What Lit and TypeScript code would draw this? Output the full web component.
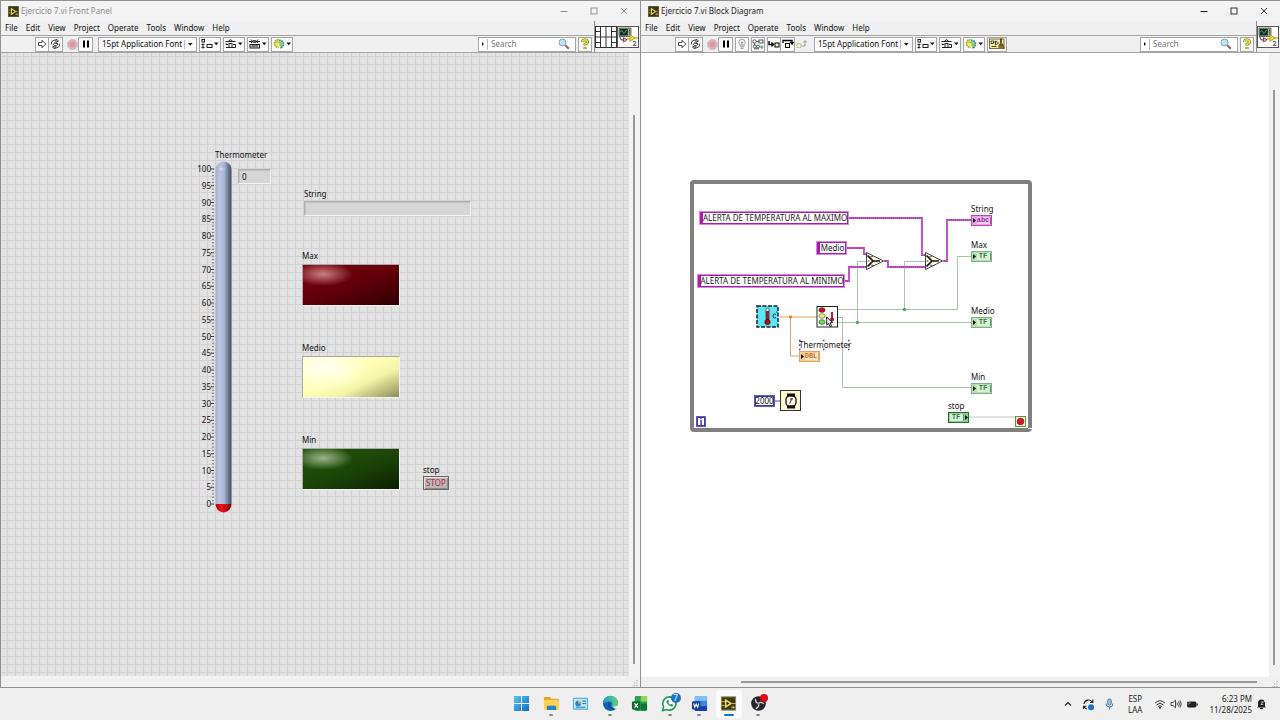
import { LitElement, html, css, svg, nothing } from "lit";
import { customElement, property } from "lit/decorators.js";
import { styleMap } from "lit/directives/style-map.js";
import { classMap } from "lit/directives/class-map.js";

const base = css`
  * { box-sizing: border-box; }
  button, input, select, output {
    font: inherit; color: inherit; margin: 0; padding: 0; border: 0;
    background: none; border-radius: 0; appearance: none; outline: none;
  }
  svg { display: block; flex: none; }
`;

/* ---------- toolbar glyphs ---------- */
const caret = svg`<path d="M0 0h4.500l-2.250 2.700z" fill="#111"/>`;
const glyphs: Record<string, unknown> = {
  run: html`<svg width="10" height="10" viewBox="0 0 10 10"><path d="M1.500 3.500h3.500V1.200L8.800 5 5 8.800V6.500H1.500z" fill="#fff" stroke="#333" stroke-width=".9"/></svg>`,
  cont: html`<svg width="11" height="10" viewBox="0 0 11 10"><g fill="none" stroke="#333" stroke-width=".9"><path d="M1.200 5.500Q1 1.500 4 1.200h3M9.800 4.500Q10 8.500 7 8.800H4"/><path d="M6 .300l2.500 1.500L6 3.500zM5 6.500L2.500 8.200 5 9.800z" fill="#fff"/><path d="M3 6l2-2.500 1 1.500 1-1 1 1-2 2.500-1-1.500"/></g></svg>`,
  abort: html`<svg width="11" height="11" viewBox="0 0 11 11"><path d="M3.500.8h4l2.700 2.700v4L7.500 10.200h-4L.8 7.500v-4z" fill="#e3b4bc" stroke="#bfaeb2" stroke-width=".8"/><circle cx="5.500" cy="5.500" r="2.900" fill="#d99aa6"/></svg>`,
  pause: html`<svg width="8" height="8" viewBox="0 0 8 8"><path d="M1 .5h2v7H1zM5 .5h2v7H5z" fill="#000"/></svg>`,
  bulb: html`<svg width="10" height="12" viewBox="0 0 10 12"><path d="M5 1a3.200 3.200 0 0 0-2 5.700V8h4V6.700a3.200 3.200 0 0 0-2-5.700z" fill="#f4f4f4" stroke="#999" stroke-width=".9"/><path d="M3.300 9h3.400M3.600 10.500h2.800M5 7.500V4M4 4l1 1 1-1" stroke="#888" stroke-width=".8" fill="none"/></svg>`,
  retain: html`<svg width="12" height="11" viewBox="0 0 12 11"><g fill="none" stroke="#444" stroke-width=".9"><circle cx="2.500" cy="2.500" r="1.700"/><rect x="7" y="1" width="4" height="3"/><path d="M4.200 2.500H7M2.500 4.200v2"/><circle cx="2.800" cy="7.500" r="1.500"/><circle cx="6" cy="7.500" r="1.500"/><path d="M2 9.800h5"/></g><path d="M8 8h3.500M9.800 6.300V10" stroke="#3a9d4c" stroke-width="1"/></svg>`,
  into: html`<svg width="12" height="9" viewBox="0 0 12 9"><path d="M1 1v3.500h4M3.500 2.500l2 2-2 2" fill="none" stroke="#000" stroke-width="1.400"/><rect x="7" y="3" width="4" height="4" fill="#f7f4c4" stroke="#000"/></svg>`,
  over: html`<svg width="12" height="10" viewBox="0 0 12 10"><path d="M1 4V1.500h9V4M8 3l2 2 1.500-2" fill="none" stroke="#000" stroke-width="1.300"/><rect x="3.500" y="4.500" width="4" height="4" fill="#f7f4c4" stroke="#000"/></svg>`,
  out: html`<svg width="12" height="10" viewBox="0 0 12 10"><rect x="1" y="5" width="4" height="3.500" fill="#f8f7d0" stroke="#b9b78f" stroke-width=".8"/><path d="M5.500 7H9V2M7.200 3.500L9 1.500l1.800 2" fill="none" stroke="#999" stroke-width="1"/></svg>`,
  align: html`<svg width="18" height="12" viewBox="0 0 18 12"><g fill="none" stroke="#222"><rect x="1" y="1.500" width="2.500" height="2.500"/><path d="M.5 6.500h3M2 5.500v5M.5 9.500h3"/><rect x="6" y="6.500" width="5" height="3"/></g><g transform="translate(13 4.500)">${caret}</g></svg>`,
  dist: html`<svg width="18" height="12" viewBox="0 0 18 12"><g fill="none" stroke="#222"><path d="M.5 3.500h10M3.500 3q2-2.500 4 0"/><path d="M1 5.500v1h2M1 9.500h3"/><rect x="4" y="5.500" width="3" height="4"/><path d="M7 9.500h3.500V6.500H8"/></g><g transform="translate(13 4.500)">${caret}</g></svg>`,
  size: html`<svg width="18" height="12" viewBox="0 0 18 12"><path d="M0 3.500h11M2 1.500L3.800 3.500 2 5M9 1.500L7.200 3.500 9 5" fill="none" stroke="#222"/><path d="M4 2h3v3H4z" fill="#555"/><rect x="1" y="6.500" width="9.500" height="3.500" fill="#ccc" stroke="#222"/><path d="M2.500 8h6.500" stroke="#222"/><g transform="translate(13 4.500)">${caret}</g></svg>`,
  order: html`<svg width="18" height="12" viewBox="0 0 18 12"><path d="M5.500 1.500a4 4 0 1 0 0 8" fill="#e8ec7a" stroke="#a8b020" stroke-width="1.700" stroke-dasharray="1.700 .6"/><path d="M6 2.500a3.700 3.700 0 1 1 1 7.300" fill="#8fd0dc" stroke="#2a8da6" stroke-width="1.700" stroke-dasharray="1.700 .6"/><path d="M3.500 4l3.500.500 1 3M6.500 6.500L8 8l1.500-1.700" fill="none" stroke="#b8c21c" stroke-width="1.300"/><g transform="translate(13.500 4.500)">${caret}</g></svg>`,
  clean: html`<svg width="16" height="12" viewBox="0 0 16 12"><rect x=".5" y="1" width="14.500" height="9.500" fill="#f5f1a0" stroke="#77703a"/><path d="M2 3h2.500v2.500H2zM6.500 3l3 2-3 2zM4.500 4h2M2.500 8.500h5" fill="#fff" stroke="#333" stroke-width=".9"/><path d="M12 .5v5" stroke="#3b2d10" stroke-width="1.600"/><path d="M9.500 11V7.500L10.800 5.500h2.700L15 7.500V11z" fill="#5c4718"/><path d="M11 7.500V11M13 7.500V11" stroke="#d6b050" stroke-width=".8"/></svg>`,
};

const viIcon = html`<svg width="22" height="22" viewBox="0 0 22 22"><rect x=".5" y=".5" width="21" height="21" fill="#fff" stroke="#555"/><rect x="2" y="2" width="12" height="8.500" fill="#a8a8a0" stroke="#444" stroke-width=".7"/><rect x="2.800" y="2.800" width="8" height="6.700" fill="#12301a"/><path d="M3.500 6q1.200-3 2.300 0t2.300 0 2-1" fill="none" stroke="#43c968" stroke-width=".8"/><path d="M12 4h1M12 6h1M12 8h1" stroke="#333"/><path d="M3 11q0 3.500 4.500 3" fill="none" stroke="#555a90" stroke-width="1.300"/><path d="M6.500 11.500l3.500 2.300-3.500 2.200z" fill="#f0a8b0" stroke="#a02a34" stroke-width=".9"/><path d="M13 8.500l4.500 3.500-4.500 3.500z" fill="#f2e23a" stroke="#8d8410" stroke-width=".7"/><path d="M10 13h3M17 12h4" stroke="#c8b420" stroke-width="1.300"/><text x="15.500" y="20" font-size="7" font-family="Noto Sans, sans-serif" fill="#111">2</text></svg>`;

const connector = html`<svg width="22" height="22" viewBox="0 0 22 22"><rect x=".5" y=".5" width="21" height="21" fill="#fff" stroke="#333"/><path d="M5.500 0v22M11 0v22M16.500 0v22M0 11h22M0 5.500h5.500M0 16.500h5.500M16.500 5.500H22M16.500 16.500H22" stroke="#333" stroke-width="1" fill="none"/></svg>`;

const lvLogo = (n: number) => html`<svg width=${n} height=${n} viewBox="0 0 16 16"><rect width="16" height="16" rx="1" fill="#3d3a1c"/><rect x=".8" y=".8" width="14.400" height="14.400" fill="none" stroke="#77703a" stroke-width=".8"/><path d="M5 4l6 4-6 4z" fill="#2a2814" stroke="#ead86b" stroke-width="1.500"/><path d="M1 6h3M1 10h3M11 8h3M11 12h4M13 10.500v3" stroke="#c9bb5a" stroke-width="1"/></svg>`;

@customElement("vi-window")
export class ViWindow extends LitElement {
  @property() heading = "";
  @property({ type: Boolean }) active = false;
  @property({ type: Boolean }) connector = false;
  @property({ attribute: false }) tools: string[][] = [];
  @property({ attribute: false }) toolsAfter: string[][] = [];

  static styles = [base, css`
    :host {
      display: grid; grid-template-rows: auto auto minmax(0, 1fr) auto;
      min-width: 0; min-height: 0; background: #f0f0f0;
      border: 1px solid #909090; border-width: 1px 0 1px 1px; color: #111;
    }
    .title { display: flex; align-items: center; height: 20px; padding: 0 1px 0 7px; gap: 2px; background: #f3f3f3; color: #8c8c8c; }
    .title h1 { flex: 1; margin: 0; font: inherit; }
    .title.on { color: #222; }
    .caps { display: flex; }
    .caps button { width: 30px; height: 20px; display: grid; place-items: center; }
    .head { display: flex; }
    .bars { flex: 1; min-width: 0; }
    .menu { display: flex; height: 14px; gap: 8px; padding-left: 4px; align-items: center; }
    .tools { display: flex; height: 18px; align-items: center; border: 1px solid #a4a4a4; border-width: 1px 0; padding: 0 2px 0 34px; gap: 2px; background: #f0f0f0; }
    .group { display: flex; }
    .group button { height: 15px; padding: 0; min-width: 14px; display: grid; place-items: center; border: 1px solid #a6a6a6; background: #fafafa; }
    .group button + button { border-left: 0; }
    .group .flat { border-color: transparent #a6a6a6 transparent transparent; background: none; }
    .group .bare { border-color: transparent; background: none; }
    .drop button { padding: 0 1px; }
    .font { display: flex; align-items: center; border: 1px solid #a6a6a6; background: #fafafa; width: 99px; height: 15px; margin-left: 3px; }
    .font select { flex: 1; min-width: 0; height: 13px; padding-left: 3px; }
    .font i { width: 12px; height: 9px; border-left: 1px solid #bbb; display: grid; place-items: center; pointer-events: none; }
    .spacer { flex: 1; }
    .search { display: flex; align-items: center; width: 98px; height: 15px; border: 1px solid #a6a6a6; background: #fff; padding: 0 5px 0 3px; gap: 3px; }
    .search input { flex: 1; min-width: 0; height: 11px; padding-left: 3px; border-left: 1px solid #bbb; }
    .search input::placeholder { color: #777; opacity: 1; }
    .help { width: 14px; height: 15px; border: 1px solid #a6a6a6; background: #fafafa; display: grid; place-items: center; }
    .pane { display: flex; padding-top: 5px; border-left: 1px solid #909090; border-bottom: 1px solid #a4a4a4; padding-right: 1px; }
    .body { display: grid; grid-template-columns: minmax(0, 1fr) 11px; min-height: 0; }
    .view { overflow: hidden; min-height: 0; display: grid; }
    .vscroll { padding: 62px 0 12px 4px; background: #f2f2f2; }
    .vscroll.up { padding-top: 37px; }
    .vscroll i, .foot i { display: block; background: #999; width: 2px; height: 100%; }
    .foot { height: 10px; display: flex; padding: 4px 2px 0 100px; }
    .foot.tall { height: 11px; }
    .foot i { flex: 1; height: 2px; margin-right: 15px; }
    .foot i.none { background: none; }
    .foot svg { margin-left: auto; }
  `];

  private group(names: string[], drop = false) {
    return html`<div class=${classMap({ group: true, drop })}>${names.map((n) => html`<button
      class=${classMap({ flat: n === "abort", bare: n === "out" })} aria-label=${n}>${glyphs[n]}</button>`)}</div>`;
  }

  render() {
    return html`
      <header class=${classMap({ title: true, on: this.active })}>
        ${lvLogo(11)}<h1>${this.heading}</h1>
        <div class="caps">
          <button aria-label="Minimize"><svg width="8" height="8" viewBox="0 0 8 8"><path d="M.5 4.500h7" stroke="currentColor"/></svg></button>
          <button aria-label="Maximize"><svg width="8" height="8" viewBox="0 0 8 8"><rect x="1" y="1" width="6" height="6" fill="none" stroke="currentColor" stroke-width=".9"/></svg></button>
          <button aria-label="Close"><svg width="8" height="8" viewBox="0 0 8 8"><path d="M1 1l6 6M7 1L1 7" stroke="currentColor" stroke-width=".9"/></svg></button>
        </div>
      </header>
      <div class="head">
        <div class="bars">
          <nav class="menu">${["File", "Edit", "View", "Project", "Operate", "Tools", "Window", "Help"].map((m) => html`<button>${m}</button>`)}</nav>
          <div class="tools">
            ${this.tools.map((g) => this.group(g))}
            <div class="font"><select aria-label="Font"><option>15pt Application Font</option></select><i><svg width="5" height="3" viewBox="0 0 5 3">${caret}</svg></i></div>
            ${this.toolsAfter.map((g) => this.group(g, true))}
            <span class="spacer"></span>
            <div class="search">
              <svg width="2" height="4" viewBox="0 0 2 4"><path d="M0 0l2 2-2 2z" fill="#111"/></svg>
              <input type="search" aria-label="Search" placeholder="Search">
              <svg width="12" height="12" viewBox="0 0 12 12"><path d="M7 7l3.800 3.800" stroke="#8b6a58" stroke-width="2"/><circle cx="4.500" cy="4.500" r="3.500" fill="#bfe3f2" stroke="#7fa6b8"/></svg>
            </div>
            <button class="help" aria-label="Help"><svg width="10" height="12" viewBox="0 0 10 12"><path d="M2.500 4Q2.500 1.800 5 1.800T7.500 4Q7.500 5.200 5 6.200V7.800M5 9v2" fill="none" stroke="#6a6a1a" stroke-width="2.800"/><path d="M2.500 4Q2.500 1.800 5 1.800T7.500 4Q7.500 5.200 5 6.200V7.800M5 9.200v1.500" fill="none" stroke="#e6ea3c" stroke-width="1.700"/></svg></button>
          </div>
        </div>
        <div class="pane">${this.connector ? connector : nothing}${viIcon}</div>
      </div>
      <div class="body"><div class="view"><slot></slot></div><div class=${classMap({ vscroll: true, up: this.active })}><i></i></div></div>
      <div class=${classMap({ foot: true, tall: !this.active })}>
        <i class=${this.active ? "" : "none"}></i>
        <svg width="6" height="6" viewBox="0 0 6 6"><path d="M5 0v1M5 2.500v1M5 5v1M2.500 2.500v1M2.500 5v1M0 5v1" stroke="#aaa" stroke-width="1.200"/></svg>
      </div>`;
  }
}

@customElement("front-panel")
export class FrontPanel extends LitElement {
  static styles = [base, css`
    :host {
      display: block; position: relative; background-color: #e2e2e2;
      background-image: linear-gradient(90deg, #d2d2d2 1px, transparent 1px), linear-gradient(#d2d2d2 1px, transparent 1px);
      background-size: 8px 8px; background-position: 6px 3px;
    }
    .item { position: absolute; display: flex; flex-direction: column; align-items: flex-start; line-height: 12px; }
    .thermo { left: 195px; top: 96px; }
    .thermo > label { padding-left: 19px; }
    .row { display: flex; align-items: flex-start; }
    .scale { display: flex; flex-direction: column; justify-content: space-between; width: 15px; height: 347px; margin-top: 2px; text-align: right; }
    .scale + svg { margin: 7px 1px 0 0; }
    .digital { width: 33px; height: 15px; margin: 8px 0 0 6px; padding-left: 3px; }
    .sunk { background: #d6d6d6; border: 1px solid; border-color: #b0b0b0 #f4f4f4 #f4f4f4 #b0b0b0; box-shadow: inset 1px 1px 1px #c2c2c2; }
    .string { left: 303px; top: 135px; gap: 1px; }
    .string input { width: 167px; height: 15px; }
    .led { left: 301px; gap: 2px; }
    .led.max { top: 197px; } .led.medio { top: 289px; } .led.min { top: 381px; }
    .led output { display: block; width: 98px; height: 42px; border: 1px solid; border-color: #a8a8a8 #f2f2f2 #f2f2f2 #a8a8a8; }
    .max output { background: radial-gradient(ellipse 30px 12px at 20px 9px, #c98080, #a0404000), linear-gradient(160deg, #740010 10%, #620008 50%, #2c0002 100%); }
    .medio output { background: radial-gradient(ellipse 46px 26px at 22px 10px, #fffff4, #ffffd000), linear-gradient(155deg, #ffffb4 45%, #f5f5a8 65%, #8c8c58 100%); }
    .min output { background: radial-gradient(ellipse 30px 12px at 20px 9px, #9bb58c, #5a8a4000), linear-gradient(160deg, #1f5208 10%, #1c4608 50%, #0a2000 100%); }
    .stop { left: 422px; top: 411px; }
    .stop button { width: 26px; height: 14px; line-height: 10px; background: #b8b8b8; border: 1px solid #666; box-shadow: inset 1px 1px #e2e2e2, inset -1px -1px #8a8a8a; color: #c8203c; }
  `];

  private led(name: string) {
    const id = name.toLowerCase();
    return html`<div class="item led ${id}"><label for=${id}>${name}</label><output id=${id}></output></div>`;
  }

  render() {
    const marks = Array.from({ length: 21 }, (_, i) => 100 - i * 5);
    const ticks = Array.from({ length: 101 }, (_, i) => i);
    return html`
      <div class="item thermo">
        <label for="temp">Thermometer</label>
        <div class="row">
          <div class="scale">${marks.map((m) => html`<span>${m}</span>`)}</div>
          <svg width="3" height="337" viewBox="0 0 3 337">${ticks.map((t) => svg`<path d=${`M${t % 5 ? 1 : 0} ${(t * 3.35 + 1).toFixed(2)}H3`} stroke=${t % 5 ? "#666" : "#222"} stroke-width=".9"/>`)}</svg>
          <svg width="17" height="353" viewBox="0 0 17 353">
            <defs>
              <linearGradient id="tube"><stop offset="0" stop-color="#a3aecc"/><stop offset=".25" stop-color="#bcc6e2"/><stop offset=".55" stop-color="#a8b4d0"/><stop offset=".85" stop-color="#5f6a82"/><stop offset="1" stop-color="#4a5264"/></linearGradient>
              <linearGradient id="red"><stop offset="0" stop-color="#b8000c"/><stop offset=".4" stop-color="#f01018"/><stop offset="1" stop-color="#780008"/></linearGradient>
              <radialGradient id="cap" cx=".4" cy=".6"><stop offset="0" stop-color="#dde4f6"/><stop offset="1" stop-color="#8e9aba" stop-opacity="0"/></radialGradient>
            </defs>
            <path d="M.5 8a8 7.500 0 0 1 16 0V343H.5z" fill="url(#tube)"/>
            <ellipse cx="7.500" cy="7" rx="6" ry="5" fill="url(#cap)"/>
            <path d="M.5 343h16a8 8.500 0 0 1-16 0z" fill="url(#red)"/>
          </svg>
          <input id="temp" class="digital sunk" value="0" readonly>
        </div>
      </div>
      <div class="item string"><label for="str">String</label><input id="str" class="sunk" readonly></div>
      ${["Max", "Medio", "Min"].map((n) => this.led(n))}
      <div class="item stop"><label for="halt">stop</label><button id="halt">STOP</button></div>`;
  }
}

/* Block diagram data, in loop coordinates */
const constants = [
  { text: "ALERTA DE TEMPERATURA AL MAXIMO", x: 10, y: 32, w: 148 },
  { text: "Medio", x: 127, y: 62, w: 29 },
  { text: "ALERTA DE TEMPERATURA AL MINIMO", x: 8, y: 95, w: 146 },
];
const terminals = [
  { name: "String", kind: "abc", x: 281, y: 23 },
  { name: "Max", kind: "TF", x: 281, y: 59 },
  { name: "Medio", kind: "TF", x: 281, y: 125 },
  { name: "Min", kind: "TF", x: 281, y: 191 },
  { name: "stop", kind: "TF", x: 258, y: 220, source: true },
  { name: "Thermometer", kind: "DBL", x: 109, y: 159 },
];
const strings = ["M158 38H232V75H236", "M156 68H174V74H177", "M154 101H159V87H177", "M194 81H198V87H236", "M253 81H257V40H281"];
const booleans = ["M148 129.500H267.500V76.500H281", "M214.500 130V81.500H236", "M148 142.500H281", "M167.500 142V81.500H177", "M148 137.500H152.500V207.500H281"];
const selector = (x: number, y: number) => svg`<g transform="translate(${x} ${y})"><path d="M.5.500L17.500 9 .5 17.500z" fill="#fdfbe0" stroke="#333" stroke-width=".9"/><path d="M1.500 3.500L7 9M1.500 14.500L7 9M7 9h7" stroke="#111" stroke-width="1.700"/><path d="M1.500 9h2M4 5q3 0 3-1M4.500 13l3 .500" stroke="#555"/></g>`;

@customElement("block-diagram")
export class BlockDiagram extends LitElement {
  static styles = [base, css`
    :host { display: block; position: relative; background: #fff; }
    .loop { position: absolute; left: 49px; top: 127px; width: 342px; height: 252px; border: 4px solid #808080; border-radius: 4px; }
    .space { position: absolute; left: -4px; top: -4px; width: 343px; height: 253px; }
    .wires { position: absolute; left: 0; top: 0; overflow: visible; }
    .const { position: absolute; display: flex; justify-content: center; height: 12px; border: 1px solid #a81cac; border-left-width: 3px; box-shadow: 0 0 0 1px #d68ad8; background: #fff; line-height: 10px; white-space: nowrap; color: #222; }
    .term { position: absolute; width: 21px; line-height: 12px; white-space: nowrap; }
    .chip { display: flex; align-items: center; justify-content: center; gap: 1px; height: 11px; border: 1px solid #7fb285; background: #b9dfb9; color: #2e7a3a; font: 700 7px/7px "Liberation Mono", monospace; }
    .chip b { height: 7px; width: 14px; text-align: center; border-right: 1px solid #5a9a62; background: #d8f0d6; }
    .chip.abc { border-color: #b44ab8; background: #e6a2e6; color: #9a249e; }
    .chip.abc b { background: #f3d0f3; border-color: #b44ab8; }
    .chip.DBL { border-color: #dba763; background: #f3cf9c; color: #c9771c; }
    .chip.DBL b { background: #fbe6c6; border-color: #dba763; }
    .chip.src { border-color: #1e7030; background: #8fd08f; flex-direction: row-reverse; }
    .num, .iter { position: absolute; display: flex; justify-content: center; border: 1px solid #3c3ca4; box-shadow: 0 0 0 1px #5c5cb8; background: #fff; }
    .num { left: 65px; top: 216px; width: 19px; height: 10px; line-height: 8px; }
    .iter { left: 7px; top: 237px; width: 8px; height: 9px; line-height: 7px; color: #10106e; font-weight: 700; }
  `];

  render() {
    const at = (x: number, y: number) => styleMap({ left: `${x}px`, top: `${y}px` });
    return html`<div class="loop"><div class="space">
      <svg class="wires" width="343" height="253" viewBox="0 0 343 253" fill="none">
        ${booleans.map((d) => svg`<path d=${d} stroke="#aac6aa" stroke-width="1"/>`)}
        <circle cx="214.500" cy="129.500" r="1.700" fill="#5f9a6a"/><circle cx="167.500" cy="142.500" r="1.700" fill="#5f9a6a"/>
        ${strings.map((d) => svg`<path d=${d} stroke="#b436b4" stroke-width="1.800"/><path d=${d} stroke="#e6a8e6" stroke-width=".6" stroke-dasharray="1 1"/>`)}
        <path d="M89 137h38M100.500 137v39h9" stroke="#e0a258"/><circle cx="100.500" cy="137" r="1.700" fill="#d98c2e"/>
        <path d="M85 221h5" stroke="#4a4ab0"/><path d="M279 237h46" stroke="#a8b8a8" stroke-width=".8"/>
        ${selector(176, 72)}${selector(235, 72)}
        <rect x="67" y="126" width="21" height="21" fill="#5fe6f2" stroke="#123" stroke-width="1.500" stroke-dasharray="4 1.500"/>
        <rect x="76" y="128" width="3" height="12" rx="1.500" fill="#fff" stroke="#333" stroke-width=".8"/><path d="M76 131h3v9h-3z" fill="#8c202c"/><circle cx="77.500" cy="142" r="2.700" fill="#b3101c" stroke="#400" stroke-width=".6"/><path d="M86 134.500q-3-1.500-3 1.500t3 1.500M86 132h1" stroke="#123" stroke-width=".9"/>
        <rect x="127" y="126.500" width="20.500" height="20.500" fill="#fff" stroke="#222"/>
        <ellipse cx="132" cy="130" rx="3" ry="2.300" fill="#c8101c" stroke="#522" stroke-width=".7"/><ellipse cx="132" cy="136" rx="3" ry="2.300" fill="#f6ee70" stroke="#663" stroke-width=".7"/><ellipse cx="132" cy="142" rx="3" ry="2.300" fill="#6fe04e" stroke="#353" stroke-width=".7"/>
        <path d="M142 132v8" stroke="#a03040" stroke-width="2.200"/><circle cx="142" cy="139.500" r="2" fill="#b8101c"/>
        <path d="M136.500 137l.300 8 1.800-1.700 1.400 3.200 1.500-.7-1.400-3 2.500-.3z" fill="#fff" stroke="#000" stroke-width=".9"/>
        <rect x="90.500" y="210.500" width="20" height="20" fill="#fcf9cf" stroke="#333"/>
        <path d="M97 213.500h8v3h-8zM97 225.500h8v3h-8z" fill="#111"/><rect x="96" y="216" width="10" height="10" rx="3.500" fill="#fdfbe6" stroke="#111" stroke-width="1.300"/><path d="M101 218v3l-1.500 2.500M103 219h-2" stroke="#111" stroke-width=".9"/>
        <rect x="325.500" y="236.500" width="10" height="10" fill="#e8f5d8" stroke="#6a8a3c"/><circle cx="330.500" cy="241.500" r="3.300" fill="#d81420" stroke="#8a1010" stroke-width=".7"/>
        <path d="M109 160.500h1.500M109 165h1.500M109 169.500h1.500M133 160.500h1.500M133 169.500h1.500M158 160.500h1.500M158 165h1.500M158 169.500h1.500" stroke="#446" stroke-width="1.500"/>
        <path d="M338 248.500h5" stroke="#fff"/>
      </svg>
      ${constants.map((c) => html`<div class="const" style=${styleMap({ left: `${c.x}px`, top: `${c.y}px`, width: `${c.w}px` })}>${c.text}</div>`)}
      ${terminals.map((t) => html`<div class="term" style=${at(t.x, t.y)}>${t.name}<div class=${classMap({ chip: true, [t.kind]: true, src: !!t.source })}><svg width="3" height="5" viewBox="0 0 3 5"><path d="M0 0l3 2.500L0 5z" fill="#111"/></svg><b>${t.kind}</b></div></div>`)}
      <div class="num">2000</div><div class="iter">i</div>
    </div></div>`;
  }
}

const apps = [
  { name: "Start", run: "", icon: svg`<defs><linearGradient id="w" x2="1" y2="1"><stop offset="0" stop-color="#5cc8f2"/><stop offset="1" stop-color="#0a6fc4"/></linearGradient></defs><path d="M1 1h7.500v7.500H1zM9.500 1H17v7.500H9.500zM1 9.500h7.500V17H1zM9.500 9.500H17V17H9.500z" fill="url(#w)"/>` },
  { name: "Explorer", run: "dot", icon: svg`<path d="M1 3.500Q1 2 2.500 2H7l2 2h7q1 0 1 1v3H1z" fill="#e0a320"/><rect x="1" y="5" width="16" height="11" rx="1.200" fill="#fbd154"/><path d="M4 16v-3.500q0-1 1-1h8q1 0 1 1V16z" fill="#1f86c8"/>` },
  { name: "Control Panel", run: "", icon: svg`<rect x="1" y="3" width="16" height="12.500" rx="1" fill="#48a9dc"/><rect x="2" y="4" width="14" height="10.500" fill="#bfe6f8"/><circle cx="6.500" cy="9" r="3" fill="#2a80c0"/><path d="M6.500 9V6a3 3 0 0 1 3 3z" fill="#f3b23c"/><path d="M11 6.500h4M11 9h4M4 13h10" stroke="#2a80c0" stroke-width="1.200"/>` },
  { name: "Edge", run: "dot", icon: svg`<defs><linearGradient id="e" x2="1"><stop offset="0" stop-color="#1b9de2"/><stop offset="1" stop-color="#63d46a"/></linearGradient></defs><circle cx="9" cy="9" r="8" fill="#1363b4"/><path d="M1 9a8 8 0 0 1 16-.500c0 3-2 4.500-4.500 4.500-2 0-2.500-1-1.800-2 1-1.700-.2-4-2.700-4-3.500 0-6 2-7 2z" fill="url(#e)"/><path d="M7 7.500c-2 3 0 7.500 4.500 8.300 2 0 3.500-1 4.300-2.300-3 1.500-7.500.5-7.300-3.500z" fill="#0f4f9a"/><path d="M10.500 11.500q1.500 2 5.500 0 1-.8 1-1.500l.500 4-4 .500z" fill="#f0f0f0"/>` },
  { name: "Excel", run: "", icon: svg`<rect x="4" y="1" width="13" height="16" rx="1.500" fill="#2fa34e"/><path d="M10.500 1H16q1 0 1 1v5h-6.500z" fill="#8bd456"/><path d="M10.500 9H17v7H10.500z" fill="#14753b"/><rect x="1" y="6.500" width="9" height="9" rx="1.500" fill="#136a35"/><path d="M3.700 8.800l3.600 4.500M7.300 8.800l-3.600 4.500" stroke="#fff" stroke-width="1.300"/>` },
  { name: "WhatsApp", run: "dot", badge: "7", icon: svg`<path d="M1.800 16.500l1-4A7 7 0 1 1 6 15.400z" fill="#fff" stroke="#1d9a52" stroke-width="1.700"/><path d="M6.500 5.500q-1.500 1.500.5 4 2.500 3 5 2.500l1-1.500-2-1.200-1 .9q-1.600-.7-2.300-2.300l.8-.8-.8-1.800z" fill="#1d9a52"/>` },
  { name: "Word", run: "dot", icon: svg`<rect x="4" y="1" width="13" height="16" rx="1.500" fill="#3a86e0"/><path d="M4 2q0-1 1-1h11q1 0 1 1v4H4z" fill="#7fc0f8"/><path d="M4 12h13v4q0 1-1 1H5q-1 0-1-1z" fill="#1a3fae"/><rect x="1" y="6.500" width="9" height="9" rx="1.500" fill="#173fa0"/><path d="M2.800 9l1.200 4 1.500-3.500L7 13l1.200-4" fill="none" stroke="#fff" stroke-width="1.100"/>` },
  { name: "LabVIEW", run: "on", icon: svg`<rect x="1.500" y="2" width="15" height="14" fill="#3d3a1c" stroke="#8c8238"/><path d="M6 5.500l5.500 3.500L6 12.500z" fill="#222010" stroke="#f0dc68" stroke-width="1.700"/><path d="M1 7h4M1 11h4M12 9h5M12 13h4M14 11.500v3" stroke="#c9bb5a"/>` },
  { name: "OBS", run: "dot", rec: true, icon: svg`<circle cx="9" cy="9" r="7.800" fill="#26262a"/><g fill="none" stroke="#cfcfd4" stroke-width="1.300"><path d="M9 9q-4-1-3-5M9 9q3-2.500 5.500.500M9 9q1 4-3 5.500"/></g><circle cx="9" cy="9" r="1.500" fill="#8a8a90"/>` },
];

@customElement("task-bar")
export class TaskBar extends LitElement {
  static styles = [base, css`
    :host { display: grid; grid-template-columns: 1fr auto 1fr; align-items: center; height: 32px; background: #efefef; color: #222; line-height: 11px; }
    .apps { grid-column: 2; display: grid; grid-template-columns: repeat(9, 1fr); width: 266px; justify-items: center; }
    .app { position: relative; width: 26px; height: 28px; display: flex; flex-direction: column; align-items: center; padding-top: 5px; gap: 2px; border-radius: 3px; }
    .app.on { background: #fafafa; }
    .app i { width: 4px; height: 2px; border-radius: 1px; background: #888; }
    .app.on i { width: 10px; background: #1473c4; }
    .app i.off { visibility: hidden; }
    .badge { position: absolute; right: 2px; top: 3px; width: 10px; height: 10px; border-radius: 50%; background: #1a73c0; color: #fff; line-height: 10px; text-align: center; }
    .rec { position: absolute; right: 3px; top: 4px; width: 8px; height: 8px; border-radius: 50%; background: #e30613; }
    .tray { display: flex; align-items: center; justify-content: flex-end; padding-right: 13px; }
    .tray > * { flex: none; }
    .tray svg { margin-right: 10px; }
    .tray .tight { margin-right: 4px; }
    .lang { text-align: center; margin: 0 12px 0 4px; }
    .clock { text-align: right; margin: 0 4px 0 7px; }
    .tray .last { margin-right: 0; }
  `];

  render() {
    return html`
      <nav class="apps">${apps.map((a) => html`<button class=${classMap({ app: true, on: a.run === "on" })} aria-label=${a.name}>
        <svg width="17" height="17" viewBox="0 0 18 18">${a.icon}</svg><i class=${a.run ? "" : "off"}></i>
        ${a.badge ? html`<span class="badge">${a.badge}</span>` : nothing}${a.rec ? html`<span class="rec"></span>` : nothing}
      </button>`)}</nav>
      <div class="tray">
        <svg width="8" height="8" viewBox="0 0 8 8"><path d="M1 5.500l3-3 3 3" fill="none" stroke="#222" stroke-width="1.100"/></svg>
        <svg width="13" height="13" viewBox="0 0 13 13"><path d="M2 6a4.500 4.500 0 0 1 8.300-1.800M10.800 1.500v3H8M1.500 11V8.200h3M2 8.500q1 2 3 2.500" fill="none" stroke="#222" stroke-width="1.100"/><circle cx="9" cy="9.300" r="3" fill="#1a73c0"/></svg>
        <svg width="9" height="12" viewBox="0 0 9 12"><rect x="2.800" y="1" width="3.400" height="6" rx="1.700" fill="#a8cbec" stroke="#3a6ea5"/><path d="M1 5.500q0 3.500 3.500 3.500T8 5.500M4.500 9v2.500" fill="none" stroke="#3a6ea5"/></svg>
        <div class="lang">ESP<br>LAA</div>
        <svg class="tight" width="12" height="10" viewBox="0 0 12 10"><path d="M1 4q5-4.500 10 0M2.600 5.800q3.400-3 6.800 0M4.200 7.500q1.800-1.500 3.600 0" fill="none" stroke="#333"/><circle cx="6" cy="8.700" r="1" fill="#222"/></svg>
        <svg class="tight" width="12" height="10" viewBox="0 0 12 10"><path d="M1 3.500h2L5.500 1.200v7.600L3 6.500H1zM7 3.500q1 1.500 0 3M8.500 2.300q2 2.700 0 5.400M10 1.300q2.600 3.700 0 7.400" fill="none" stroke="#333" stroke-width=".9"/></svg>
        <svg class="tight" width="12" height="10" viewBox="0 0 12 10"><rect x="1.500" y="3" width="8.500" height="5" rx="1" fill="#222" stroke="#222"/><path d="M11.300 4.500v2" stroke="#222"/><path d="M2.500 0v3M1 2.500h3v2q-3 1.500-3 0z" fill="#222" stroke="#efefef" stroke-width=".5"/></svg>
        <div class="clock">6:23 PM<br>11/28/2025</div>
        <svg class="last" width="11" height="12" viewBox="0 0 11 12"><path d="M2 8.500V5q0-3.500 3.500-3.500T9 5v3.500l1 1H1z" fill="#222"/><path d="M4 10.500h3" stroke="#222" stroke-width="1.300"/><path d="M5 4h2.200L5 6.500h2.200M8 1.500h2L8 3.500h2" fill="none" stroke="#efefef" stroke-width=".7"/></svg>
      </div>`;
  }
}

@customElement("app-root")
export class AppRoot extends LitElement {
  static styles = css`
    :host { display: grid; grid-template-rows: minmax(0, 1fr) auto; height: 100vh; font: 8px/12px "Noto Sans", "Open Sans", sans-serif; color: #111; }
    main { display: grid; grid-template-columns: 1fr 1fr; min-height: 0; }
  `;

  render() {
    return html`
      <main>
        <vi-window heading="Ejercicio 7.vi Front Panel" connector
          .tools=${[["run", "cont"], ["abort", "pause"]]}
          .toolsAfter=${[["align"], ["dist"], ["size"], ["order"]]}><front-panel></front-panel></vi-window>
        <vi-window heading="Ejercicio 7.vi Block Diagram" active
          .tools=${[["run", "cont"], ["abort", "pause"], ["bulb"], ["retain"], ["into", "over", "out"]]}
          .toolsAfter=${[["align"], ["dist"], ["order"], ["clean"]]}><block-diagram></block-diagram></vi-window>
      </main>
      <task-bar></task-bar>`;
  }
}
